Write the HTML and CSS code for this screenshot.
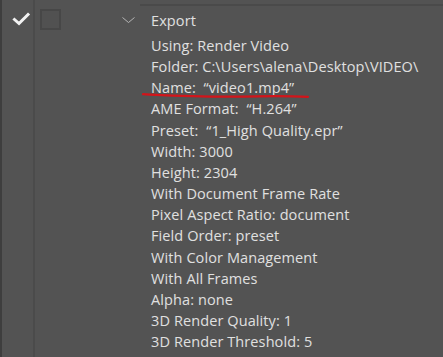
FILE: index.html
```html
<!DOCTYPE html>
<html>
<head>
<meta charset="utf-8">
<link rel="stylesheet" href="styles.css">
</head>
<body>
<div class="panel">
  <div class="gutter">
    <svg class="check" width="33" height="36" viewBox="0 0 33 36"><polyline points="12.5,19.5 17,23.5 26,14.5" fill="none" stroke="#f2f2f2" stroke-width="3" stroke-linecap="square"/></svg>
  </div>
  <div class="main">
    <div class="topline"></div>
    <div class="head">
      <div class="box"></div>
      <svg class="chev" width="13" height="6" viewBox="0 0 13 6"><polyline points="0.5,0.5 6.5,5.5 12.5,0.5" fill="none" stroke="#b4b4b4" stroke-width="1"/></svg>
      <span class="title">Export</span>
    </div>
    <ul class="props">
      <li>Using: Render Video</li>
      <li>Folder: C:\Users\alena\Desktop\VIDEO\</li>
      <li class="marked">Name:&nbsp; “video1.mp4”<svg class="scribble" width="168" height="8" viewBox="0 0 168 8"><path d="M1 2.2 C 30 3.5, 55 4.8, 90 4.6 S 138 3.6, 166 4.8" fill="none" stroke="#d3141a" stroke-width="2.2" stroke-linecap="round"/></svg></li>
      <li>AME Format:&nbsp; “H.264”</li>
      <li>Preset:&nbsp; “1_High Quality.epr”</li>
      <li>Width: 3000</li>
      <li>Height: 2304</li>
      <li>With Document Frame Rate</li>
      <li>Pixel Aspect Ratio: document</li>
      <li>Field Order: preset</li>
      <li>With Color Management</li>
      <li>With All Frames</li>
      <li>Alpha: none</li>
      <li>3D Render Quality: 1</li>
      <li>3D Render Threshold: 5</li>
    </ul>
  </div>
</div>
</body>
</html>
```

FILE: styles.css
```css
html, body {
  margin: 0;
  padding: 0;
  background: #535353;
}
body {
  width: 443px;
  height: 357px;
  overflow: hidden;
  font-family: "Open Sans", "Noto Sans", sans-serif;
  font-size: 14.5px;
  letter-spacing: 0.1px;
  color: #e0e0e0;
}
.panel {
  display: flex;
  height: 357px;
  border-left: 2px solid #3e3e3e;
}
.gutter {
  width: 31px;
  flex: none;
  border-right: 2px solid #4b4b4b;
}
.check {
  display: block;
}
.main {
  flex: 1;
  display: flex;
  flex-direction: column;
}
.topline {
  height: 2px;
  margin-top: 4px;
  margin-left: 105px;
  background: #4a4a4a;
}
.head {
  height: 29px;
  display: flex;
  align-items: center;
}
.box {
  width: 17px;
  height: 17px;
  margin-left: 5px;
  margin-top: -3px;
  border: 2px solid #474747;
  background: #515151;
  flex: none;
}
.chev {
  margin-left: 61px;
  margin-top: -2px;
  flex: none;
}
.title {
  margin-left: 16px;
  line-height: 20px;
}
.props {
  list-style: none;
  margin: 0;
  padding: 0 0 0 116px;
}
.props li {
  line-height: 21.17px;
  height: 21.17px;
  white-space: nowrap;
}
.marked {
  position: relative;
}
.scribble {
  position: absolute;
  left: -9px;
  top: 15px;
}
```
